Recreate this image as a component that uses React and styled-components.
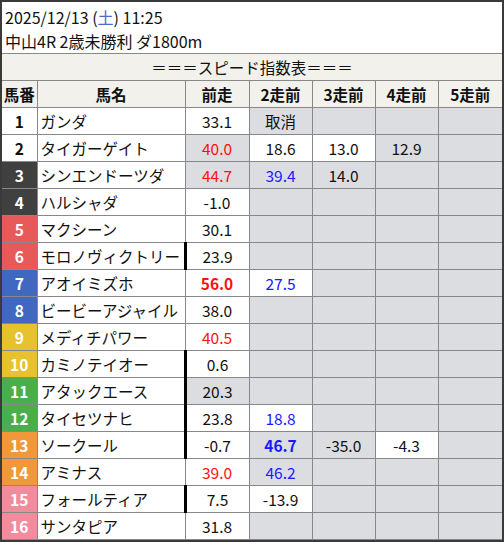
import React from "react";
import styled, { createGlobalStyle } from "styled-components";

const GlobalStyle = createGlobalStyle`
  html, body {
    margin: 0;
    padding: 0;
    background: #ffffff;
  }
  body {
    font-family: "Noto Sans CJK JP", "Noto Sans", sans-serif;
    color: #111;
  }
`;

const Frame = styled.div`
  width: 504px;
  height: 542px;
  box-sizing: border-box;
  border: 2px solid #3a3a3a;
  background: #fff;
  overflow: hidden;
`;

const Info = styled.div`
  height: 52px;
  box-sizing: border-box;
  padding: 3px 0 0 3px;
  font-size: 16px;
  line-height: 24px;
  border-bottom: 1px solid #888;
`;

const Sat = styled.span`
  color: #4a6cc4;
`;

const Table = styled.table`
  width: 500px;
  border-collapse: collapse;
  table-layout: fixed;
  font-size: 15.5px;
`;

const Title = styled.td`
  height: 26px;
  padding: 0;
  background: #f3f1ec;
  text-align: center;
  border-bottom: 1px solid #888;
  line-height: 26px;
`;

const Head = styled.th`
  height: 26px;
  padding: 0;
  background: #f3f1ec;
  font-weight: 700;
  text-align: center;
  border: 1px solid #888;
  border-top: none;
  &:first-child { border-left: none; }
  &:last-child { border-right: none; }
`;

const NumCell = styled.td`
  height: 26px;
  padding: 0;
  text-align: center;
  font-weight: 700;
  background: ${(p) => p.$bg};
  color: ${(p) => p.$fg};
  border: 1px solid #888;
  border-left: none;
`;

const NameCell = styled.td`
  padding: 0 0 0 3px;
  white-space: nowrap;
  overflow: hidden;
  border: 1px solid #888;
`;

const Score = styled.td`
  padding: 0;
  text-align: center;
  background: ${(p) => (p.$gray ? "#dcdde1" : "#fff")};
  color: ${(p) => (p.$c === "r" ? "#ff1010" : p.$c === "b" ? "#1a1aff" : "#111")};
  font-weight: ${(p) => (p.$bold ? 700 : 400)};
  border: 1px solid #888;
  border-left: ${(p) => (p.$bar ? "3px solid #000" : "1px solid #888")};
  &:last-child { border-right: none; }
`;

const waku = {
  1: ["#ffffff", "#111"],
  2: ["#ffffff", "#111"],
  3: ["#404040", "#fff"],
  4: ["#404040", "#fff"],
  5: ["#e85a5a", "#fff"],
  6: ["#e85a5a", "#fff"],
  7: ["#4068c0", "#fff"],
  8: ["#4068c0", "#fff"],
  9: ["#e8c22e", "#fff"],
  10: ["#e8c22e", "#fff"],
  11: ["#4aae4a", "#fff"],
  12: ["#4aae4a", "#fff"],
  13: ["#f0983a", "#fff"],
  14: ["#f0983a", "#fff"],
  15: ["#f08c9c", "#fff"],
  16: ["#f08c9c", "#fff"],
};

// each score: [text, gray bg, colour, bold]
const E = ["", true];
const horses = [
  { name: "ガンダ", s: [["33.1"], ["取消", true], E, E, E] },
  { name: "タイガーゲイト", s: [["40.0", true, "r"], ["18.6"], ["13.0"], ["12.9", true], E] },
  { name: "シンエンドーツダ", s: [["44.7", true, "r"], ["39.4", true, "b"], ["14.0", true], E, E] },
  { name: "ハルシャダ", s: [["-1.0"], E, E, E, E] },
  { name: "マクシーン", s: [["30.1"], E, E, E, E] },
  { name: "モロノヴィクトリー", bar: true, s: [["23.9"], E, E, E, E] },
  { name: "アオイミズホ", s: [["56.0", false, "r", true], ["27.5", false, "b"], E, E, E] },
  { name: "ビービーアジャイル", s: [["38.0"], E, E, E, E] },
  { name: "メディチパワー", s: [["40.5", false, "r"], E, E, E, E] },
  { name: "カミノテイオー", bar: true, s: [["0.6"], E, E, E, E] },
  { name: "アタックエース", bar: true, s: [["20.3", true], E, E, E, E] },
  { name: "タイセツナヒ", bar: true, s: [["23.8"], ["18.8", false, "b"], E, E, E] },
  { name: "ソークール", bar: true, s: [["-0.7"], ["46.7", true, "b", true], ["-35.0", true], ["-4.3"], E] },
  { name: "アミナス", s: [["39.0", false, "r"], ["46.2", true, "b"], E, E, E] },
  { name: "フォールティア", bar: true, s: [["7.5"], ["-13.9"], E, E, E] },
  { name: "サンタピア", s: [["31.8"], E, E, E, E] },
];

export default function App() {
  return (
    <>
      <GlobalStyle />
      <Frame>
        <Info>
          <div>
            2025/12/13 (<Sat>土</Sat>) 11:25
          </div>
          <div>中山4R 2歳未勝利 ダ1800m</div>
        </Info>
        <Table>
          <colgroup>
            <col style={{ width: 35 }} />
            <col style={{ width: 148 }} />
            <col style={{ width: 64 }} />
            <col style={{ width: 63 }} />
            <col style={{ width: 63 }} />
            <col style={{ width: 63 }} />
            <col style={{ width: 64 }} />
          </colgroup>
          <tbody>
            <tr>
              <Title colSpan={7}>＝＝＝スピード指数表＝＝＝</Title>
            </tr>
            <tr>
              <Head>馬番</Head>
              <Head>馬名</Head>
              <Head>前走</Head>
              <Head>2走前</Head>
              <Head>3走前</Head>
              <Head>4走前</Head>
              <Head>5走前</Head>
            </tr>
            {horses.map((h, i) => (
              <tr key={i}>
                <NumCell $bg={waku[i + 1][0]} $fg={waku[i + 1][1]}>
                  {i + 1}
                </NumCell>
                <NameCell>{h.name}</NameCell>
                {h.s.map(([t, g, c, b], j) => (
                  <Score key={j} $gray={g} $c={c} $bold={b} $bar={j === 0 && h.bar}>
                    {t}
                  </Score>
                ))}
              </tr>
            ))}
          </tbody>
        </Table>
      </Frame>
    </>
  );
}
